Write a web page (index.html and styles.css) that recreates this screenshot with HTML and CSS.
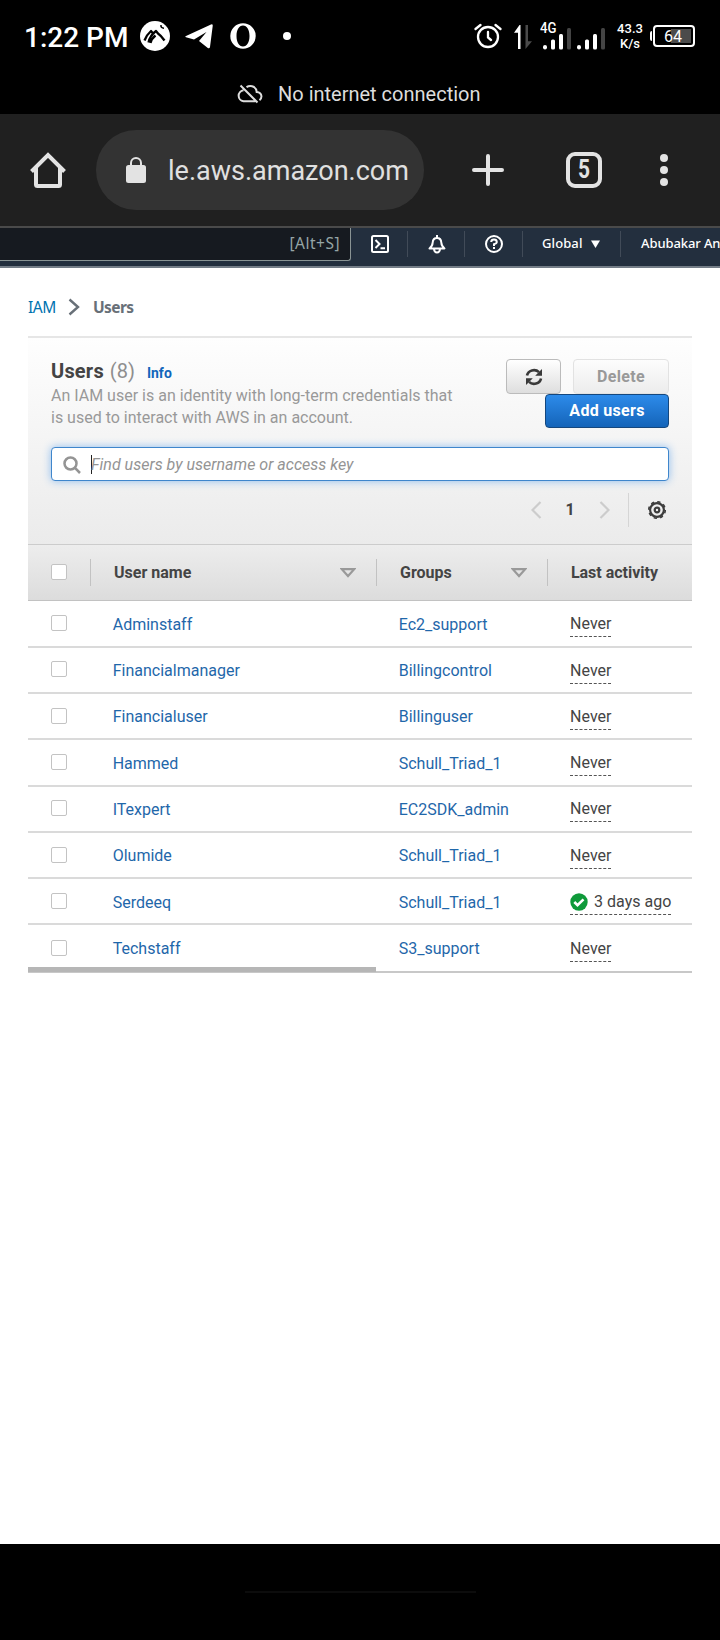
FILE: index.html
```html
<!DOCTYPE html>
<html lang="en">
<head>
<meta charset="utf-8">
<title>IAM Users</title>
<link rel="stylesheet" href="styles.css">
</head>
<body>
<div class="status">
  <span class="clock">1:22 PM</span>
  <svg class="i-app" width="30" height="30" viewBox="0 0 30 30"><circle cx="15" cy="15" r="15" fill="#fff"/><path d="M4.500 19.500Q6.500 14 11 10l2 2.500 1.500-1M8.500 21.500Q10 14.500 16 10l2 2.500q3 2 6.500 7M10.500 22q1-4.500 5-7.500" fill="none" stroke="#000" stroke-width="2.300" stroke-linejoin="round"/><path d="M21 4q-.5 3 3 3.200" fill="none" stroke="#000" stroke-width="1.500"/></svg>
  <svg class="i-tg" width="28" height="25" viewBox="0 0 28 25"><path d="M1 12 26 .5q2-.7 1.700 1.500L25 23q-.4 2-2.200 1L14 17l7.500-9L9 15.500 1 13.300q-1.300-.7 0-1.300z" fill="#fff"/></svg>
  <svg class="i-opera" width="26" height="26" viewBox="0 0 26 26"><path fill="#fff" fill-rule="evenodd" d="M13 .3a12.500 12.500 0 1 0 0 25.400 12.500 12.500 0 1 0 0-25.400zM13 2.500c4 0 6.500 4.500 6.500 10.500S17 23.500 13 23.500 6.500 19 6.500 13 9 2.500 13 2.500z"/></svg>
  <span class="dot"></span>
  <svg class="i-alarm" width="28" height="26" viewBox="0 0 28 26" fill="none" stroke="#fff" stroke-width="2.300" stroke-linecap="round"><circle cx="14" cy="14" r="10"/><path d="M14 9v5.500l3 2.500M1.500 6l5-4M26.500 6l-5-4"/></svg>
  <svg class="i-data" width="18" height="24" viewBox="0 0 18 24"><path d="M6.500 24V0h-1L0 7.800h4V24z" fill="#fff"/><path d="M11.500 0v24l6.500-7.800h-4V0z" fill="#4a4a4a"/></svg>
  <svg class="i-signal" width="66" height="34" viewBox="0 -3 66 34"><text x="0" y="10.500" class="g4" textLength="16.500" lengthAdjust="spacingAndGlyphs">4G</text><g fill="#fff"><rect x="3" y="23" width="4" height="4.500" rx="2"/><rect x="11" y="17.500" width="4" height="10" rx="1.500"/><rect x="19" y="12" width="4" height="15.500" rx="1.500"/><rect x="37" y="23" width="4" height="4.500" rx="2"/><rect x="45" y="17.500" width="4" height="10" rx="1.500"/><rect x="53" y="12" width="4" height="15.500" rx="1.500"/></g><g fill="#444"><rect x="27" y="6" width="4" height="21.500" rx="1.500"/><rect x="61" y="6" width="4" height="21.500" rx="1.500"/></g></svg>
  <span class="speed">43.3<br>K/s</span>
  <span class="nub"></span>
  <span class="battery">64</span>
</div>
<div class="offline">
  <svg width="26" height="20" viewBox="0 0 26 20" fill="none" stroke="#ddd" stroke-width="2"><path d="M6.500 6.200A5.600 5.600 0 0 0 6.500 17.300H18.500M9.500 3.200Q13 .9 17 3q2.500 1.700 2.700 5 4.300.2 4.800 4.300-.1 2.500-2 4M3.500 1.500 20.500 18.500"/></svg>
  <span>No internet connection</span>
</div>
<div class="browser">
  <svg class="i-home" width="36" height="36" viewBox="0 0 36 36" fill="none" stroke="#e3e3e3" stroke-width="4"><path d="M1.500 19.500 18 3l16.500 16.500M6 16v16.500q0 1.500 1.500 1.500h21q1.500 0 1.500-1.500V16"/></svg>
  <div class="url">
    <svg width="20" height="26" viewBox="0 0 20 26"><rect y="8" width="20" height="18" rx="2.500" fill="#e3e3e3"/><path d="M5 9V6a5 5 0 0 1 10 0v3" fill="none" stroke="#e3e3e3" stroke-width="2"/></svg>
    <span>le.aws.amazon.com</span>
  </div>
  <svg class="i-plus" width="32" height="32" viewBox="0 0 32 32"><path d="M16 2v28M2 16h28" stroke="#e3e3e3" stroke-width="4" stroke-linecap="round"/></svg>
  <svg class="tabs" width="36" height="36" viewBox="0 0 36 36"><rect x="2" y="2" width="32" height="32" rx="7" fill="none" stroke="#e3e3e3" stroke-width="4"/><text x="12" y="26.300" textLength="12" lengthAdjust="spacingAndGlyphs">5</text></svg>
  <svg class="i-more" width="8" height="32" viewBox="0 0 8 32" fill="#e3e3e3"><circle cx="4" cy="4" r="4"/><circle cx="4" cy="16" r="4"/><circle cx="4" cy="28" r="4"/></svg>
</div>
<div class="awsnav">
  <div class="awssearch">[Alt+S]</div>
  <div class="navitem cell1"><svg width="18" height="18" viewBox="0 0 18 18" fill="none" stroke="#fff" stroke-width="2"><rect x="1" y="1" width="16" height="16" rx="1.500"/><path d="M4.500 5l4 4-4 4M9.500 13.200h4.500"/></svg></div>
  <div class="navitem cell2"><svg width="18" height="19" viewBox="0 0 18 19" fill="none" stroke="#fff" stroke-width="2" stroke-linejoin="round"><path d="M1.500 13.500c2-1.500 3-2.700 3.200-6Q5 3 9 3t4.300 4.500c.2 3.300 1.200 4.500 3.200 6zM9 0v3M6 14q.3 3.500 3 3.500t3-3.500"/></svg></div>
  <div class="navitem cell3"><svg width="18" height="18" viewBox="0 0 18 18" fill="none" stroke="#fff" stroke-width="2"><circle cx="9" cy="9" r="8"/><path d="M6.200 7Q6.300 4.500 9 4.500T11.800 7Q11.700 8.500 9 9.300V11M9 12v2"/></svg></div>
  <div class="navitem cell4"><span>Global</span><svg width="9" height="8" viewBox="0 0 9 8"><path d="M0 .5h9L4.500 8z" fill="#fff"/></svg></div>
  <div class="navitem cell5">Abubakar An</div>
</div>
<div class="page">
  <div class="crumbs">
    <a>IAM</a>
    <svg width="12" height="18" viewBox="0 0 12 18"><path d="M1.500 1.500 10 9l-8.500 7.500" fill="none" stroke="#687078" stroke-width="2.400"/></svg>
    <b>Users</b>
  </div>
  <div class="panel">
    <div class="top">
      <div class="intro">
        <div class="title"><b>Users</b><span>(8)</span><a>Info</a></div>
        <p>An IAM user is an identity with long-term credentials that<br>is used to interact with AWS in an account.</p>
      </div>
      <div class="actions">
        <span class="btn refresh"><svg width="18" height="18" viewBox="0 0 18 18"><path d="M2 7.500A7 6.500 0 0 1 14 4.200M16 10.500A7 6.500 0 0 1 4 13.800" fill="none" stroke="#3a3a3a" stroke-width="2.600"/><path d="M17 1v6.800h-6.800zM1 17v-6.800h6.800z" fill="#3a3a3a"/></svg></span>
        <span class="btn delete">Delete</span>
        <span class="btn add">Add users</span>
      </div>
    </div>
    <div class="find">
      <svg width="18" height="18" viewBox="0 0 18 18" fill="none" stroke="#949494" stroke-width="2.500"><circle cx="7.500" cy="7.500" r="6"/><path d="M11.700 11.700 17 17"/></svg>
      <span class="caret"></span><i>Find users by username or access key</i>
    </div>
    <div class="pager">
      <svg width="11" height="18" viewBox="0 0 11 18"><path d="M9.500 1 1.500 9l8 8" fill="none" stroke="#ccc" stroke-width="2.200"/></svg>
      <b>1</b>
      <svg width="11" height="18" viewBox="0 0 11 18"><path d="M1.500 1l8 8-8 8" fill="none" stroke="#ccc" stroke-width="2.200"/></svg>
      <span class="sep"></span>
      <svg width="18" height="18" viewBox="0 0 18 18" fill="none" stroke="#3d3d3d"><circle cx="9" cy="9" r="6.900" stroke-width="2.200"/><circle cx="9" cy="9" r="8.300" stroke-width="1.500" stroke-dasharray="3.260 3.260"/><circle cx="9" cy="9" r="2.300" stroke-width="2.200"/></svg>
    </div>
  </div>
  <div class="row head">
    <div class="c0"><span class="box"></span></div>
    <div class="c1"><b>User name</b><svg width="16" height="10" viewBox="0 0 16 10"><path d="M1.800 1.200h12.400L8 8z" fill="none" stroke="#999" stroke-width="2.200"/></svg></div>
    <div class="c2"><b>Groups</b><svg width="16" height="10" viewBox="0 0 16 10"><path d="M1.800 1.200h12.400L8 8z" fill="none" stroke="#999" stroke-width="2.200"/></svg></div>
    <div class="c3"><b>Last activity</b></div>
  </div>
  <div class="rows">
    <div class="row"><div class="c0"><span class="box"></span></div><a class="c1">Adminstaff</a><a class="c2">Ec2_support</a><div class="c3"><span class="tip">Never</span></div></div>
    <div class="row"><div class="c0"><span class="box"></span></div><a class="c1">Financialmanager</a><a class="c2">Billingcontrol</a><div class="c3"><span class="tip">Never</span></div></div>
    <div class="row"><div class="c0"><span class="box"></span></div><a class="c1">Financialuser</a><a class="c2">Billinguser</a><div class="c3"><span class="tip">Never</span></div></div>
    <div class="row"><div class="c0"><span class="box"></span></div><a class="c1">Hammed</a><a class="c2">Schull_Triad_1</a><div class="c3"><span class="tip">Never</span></div></div>
    <div class="row"><div class="c0"><span class="box"></span></div><a class="c1">ITexpert</a><a class="c2">EC2SDK_admin</a><div class="c3"><span class="tip">Never</span></div></div>
    <div class="row"><div class="c0"><span class="box"></span></div><a class="c1">Olumide</a><a class="c2">Schull_Triad_1</a><div class="c3"><span class="tip">Never</span></div></div>
    <div class="row"><div class="c0"><span class="box"></span></div><a class="c1">Serdeeq</a><a class="c2">Schull_Triad_1</a><div class="c3"><span class="tip"><svg width="18" height="18" viewBox="0 0 18 18"><circle cx="9" cy="9" r="8.700" fill="#0f9a3a"/><path d="M4.300 9l3.200 3.200L13.500 6.400" fill="none" stroke="#fff" stroke-width="2.600"/></svg>3 days ago</span></div></div>
    <div class="row last"><div class="c0"><span class="box"></span></div><a class="c1">Techstaff</a><a class="c2">S3_support</a><div class="c3"><span class="tip">Never</span></div></div>
    <div class="scroll"></div>
  </div>
</div>
<div class="gesture"><span></span></div>
</body>
</html>
```
FILE: styles.css
```css
* { box-sizing: border-box; }
body { margin: 0; width: 720px; height: 1640px; display: flex; flex-direction: column; background: #fff; font: 16px/22px Roboto, "Liberation Sans", sans-serif; color: #444; overflow: hidden; }
svg { display: block; flex: none; }

.status { height: 72px; flex: none; background: #000; color: #fff; display: flex; align-items: center; padding-left: 24px; }
.clock { font-size: 28px; font-weight: 500; letter-spacing: 0; width: 116px; line-height: 32px; padding-top: 3px; white-space: nowrap; }
.i-tg { margin-left: 15px; }
.i-opera { margin-left: 17px; }
.dot { width: 8px; height: 8px; border-radius: 4px; background: #fff; margin-left: 27px; }
.i-alarm { margin-left: 183px; }
.i-data { margin: 2px 0 0 12px; }
.i-signal { margin-left: 8px; }
.g4 { font: 500 14px Roboto, sans-serif; fill: #fff; }
.speed { width: 34px; margin-left: 7px; text-align: center; font-size: 13px; font-weight: 500; line-height: 15px; }
.nub { width: 2px; height: 10px; background: #fff; border-radius: 2px 0 0 2px; margin-left: 3px; }
.battery { width: 42px; height: 22px; margin-left: 1px; border: 2px solid #fff; border-radius: 4px; text-align: center; line-height: 19px; padding-right: 2px; background: linear-gradient(#4b4b4b, #4b4b4b) 16px 2px / 20px 14px no-repeat; }

.offline { height: 42px; flex: none; background: #000; color: #ddd; display: flex; align-items: center; gap: 15px; padding-left: 237px; padding-top: 2px; font-size: 20px; }

.browser { height: 114px; flex: none; background: #202020; border-bottom: 2px solid #4a4a4a; display: flex; align-items: center; padding-left: 30px; }
.url { width: 328px; height: 80px; margin-left: 30px; border-radius: 40px; background: #333; display: flex; align-items: center; gap: 22px; padding-left: 30px; font-size: 27px; color: #e0e0e0; }
.url span { padding-top: 2px; }
.i-plus { margin-left: 48px; }
.tabs { margin-left: 62px; font: 700 25px Roboto, sans-serif; fill: #e3e3e3; }
.i-more { margin-left: 58px; }

.awsnav { height: 40px; flex: none; background: #232f3e; border-bottom: 2px solid #747d87; display: flex; color: #fff; font: 500 13px "Noto Sans", sans-serif; }
.awssearch { width: 351px; height: 33px; background: #161a20; border: 1px solid #8a9494; border-width: 0 1px 1px 0; border-bottom-right-radius: 3px; font-size: 15.500px; font-weight: 400; letter-spacing: 0.5px; line-height: 31px; color: #95a5a6; text-align: right; padding-right: 10px; }
.navitem { height: 26px; margin-top: 3px; display: flex; align-items: center; white-space: nowrap; overflow: hidden; border-right: 1px solid #414b58; }
.cell1 { width: 57px; padding-left: 20px; }
.cell2 { width: 57px; padding-left: 20px; }
.cell3 { width: 58px; padding-left: 20px; }
.cell4 { width: 98px; padding-left: 19px; gap: 8px; letter-spacing: 0.1px; }
.cell4 span, .cell5 { padding-bottom: 2px; }
.cell5 { width: 99px; padding-left: 20px; border: 0; letter-spacing: -0.1px; }

.page { flex: 1; padding: 0 28px; display: flex; flex-direction: column; }
.crumbs { height: 70px; flex: none; border-bottom: 2px solid #e6e6e6; padding-top: 10px; display: flex; align-items: center; font: 15.500px "Noto Sans", sans-serif; letter-spacing: -0.500px; }
.crumbs a { color: #0073b0; width: 40px; }
.crumbs b { color: #687078; margin-left: 13px; font-weight: 700; letter-spacing: -0.600px; }
.panel { height: 206px; flex: none; background: linear-gradient(#fefefe, #ebebeb); padding: 20px 23px 0; display: flex; flex-direction: column; }
.top { display: flex; justify-content: space-between; height: 89px; }
.title { height: 27px; display: flex; align-items: baseline; line-height: 27px; }
.title b { font-size: 20px; letter-spacing: 0.2px; }
.title span { font-size: 20px; color: #8e8e8e; margin-left: 6px; }
.title a { font-size: 14px; font-weight: 700; color: #1166bb; margin-left: 12px; }
.intro p { margin: 0; color: #999; white-space: nowrap; }
.actions { width: 163px; height: 70px; display: flex; flex-wrap: wrap; justify-content: space-between; align-content: flex-start; margin-top: 1px; }
.btn { height: 35px; border: 1px solid #bbb; border-radius: 4px; display: flex; align-items: center; justify-content: center; background: linear-gradient(#fff, #dedede); font-weight: 700; letter-spacing: 0.3px; }
.refresh { width: 55px; }
.delete { width: 96px; border-color: #e2e2e2; background: linear-gradient(#fdfdfd, #ececec); color: #999; padding-top: 1px; }
.add { width: 124px; height: 34px; margin-left: auto; border-color: #14477e; background: linear-gradient(#2d8bea, #1464b9); color: #fff; }
.find { height: 34px; border: 1px solid #3f86cc; border-radius: 4px; background: #fff; box-shadow: 0 0 8px #8dbcee; display: flex; align-items: center; padding: 1px 0 0 11px; color: #949494; }
.caret { width: 1px; height: 19px; background: #222; margin-left: 10px; }
.find i { margin-left: -1px; padding-top: 1px; }
.pager { height: 34px; margin-top: 12px; display: flex; align-items: center; justify-content: flex-end; padding-right: 3px; }
.pager b { width: 9px; margin: 0 24px; }
.sep { width: 1.500px; height: 34px; background: #d5d5d5; margin: 0 19px 0 18px; }

.row { display: grid; grid-template-columns: 62px 286px 171.400px 144.600px; height: 46.300px; border-bottom: 2px solid #dadada; }
.row > * { display: flex; align-items: center; }
.head { height: 57px; flex: none; border-top: 1px solid #ccc; border-bottom: 1px solid #c2c2c2; background: linear-gradient(#ededed, #dcdcdc); }
.head > div + div { border-left: 1px solid transparent; background: linear-gradient(#c2c2c2, #c2c2c2) left 14px / 1px 27px no-repeat; background-origin: border-box; }
.head .c1, .head .c2 { justify-content: space-between; padding: 0 20px 0 23px; }
.head .c3 { padding-left: 22.500px; }
.box { width: 16px; height: 16px; border: 1px solid #c3c3c3; border-radius: 2px; background: #fff; margin-left: 23px; }
.head .box { margin-top: -2px; }
.rows { display: flex; flex-direction: column; padding-top: 0.400px; }
.rows .box { margin-top: -1px; }
.rows a { padding-left: 22.700px; color: #1f67aa; padding-top: 2.500px; }
.rows .c3 { padding: 3.500px 0 0 22.700px; }
.tip { height: 24px; border-bottom: 1px dashed #555; display: flex; align-items: center; gap: 6px; padding-bottom: 1px; white-space: nowrap; }
.last { height: 47.300px; border-bottom-color: #c8c8c8; }
.scroll { width: 348px; height: 5px; background: #b6b6b6; margin-top: -6px; position: relative; }

.gesture { height: 96px; flex: none; background: #000; display: flex; justify-content: center; padding-top: 47px; }
.gesture span { width: 231px; height: 2px; background: #0c0c0c; }
```
